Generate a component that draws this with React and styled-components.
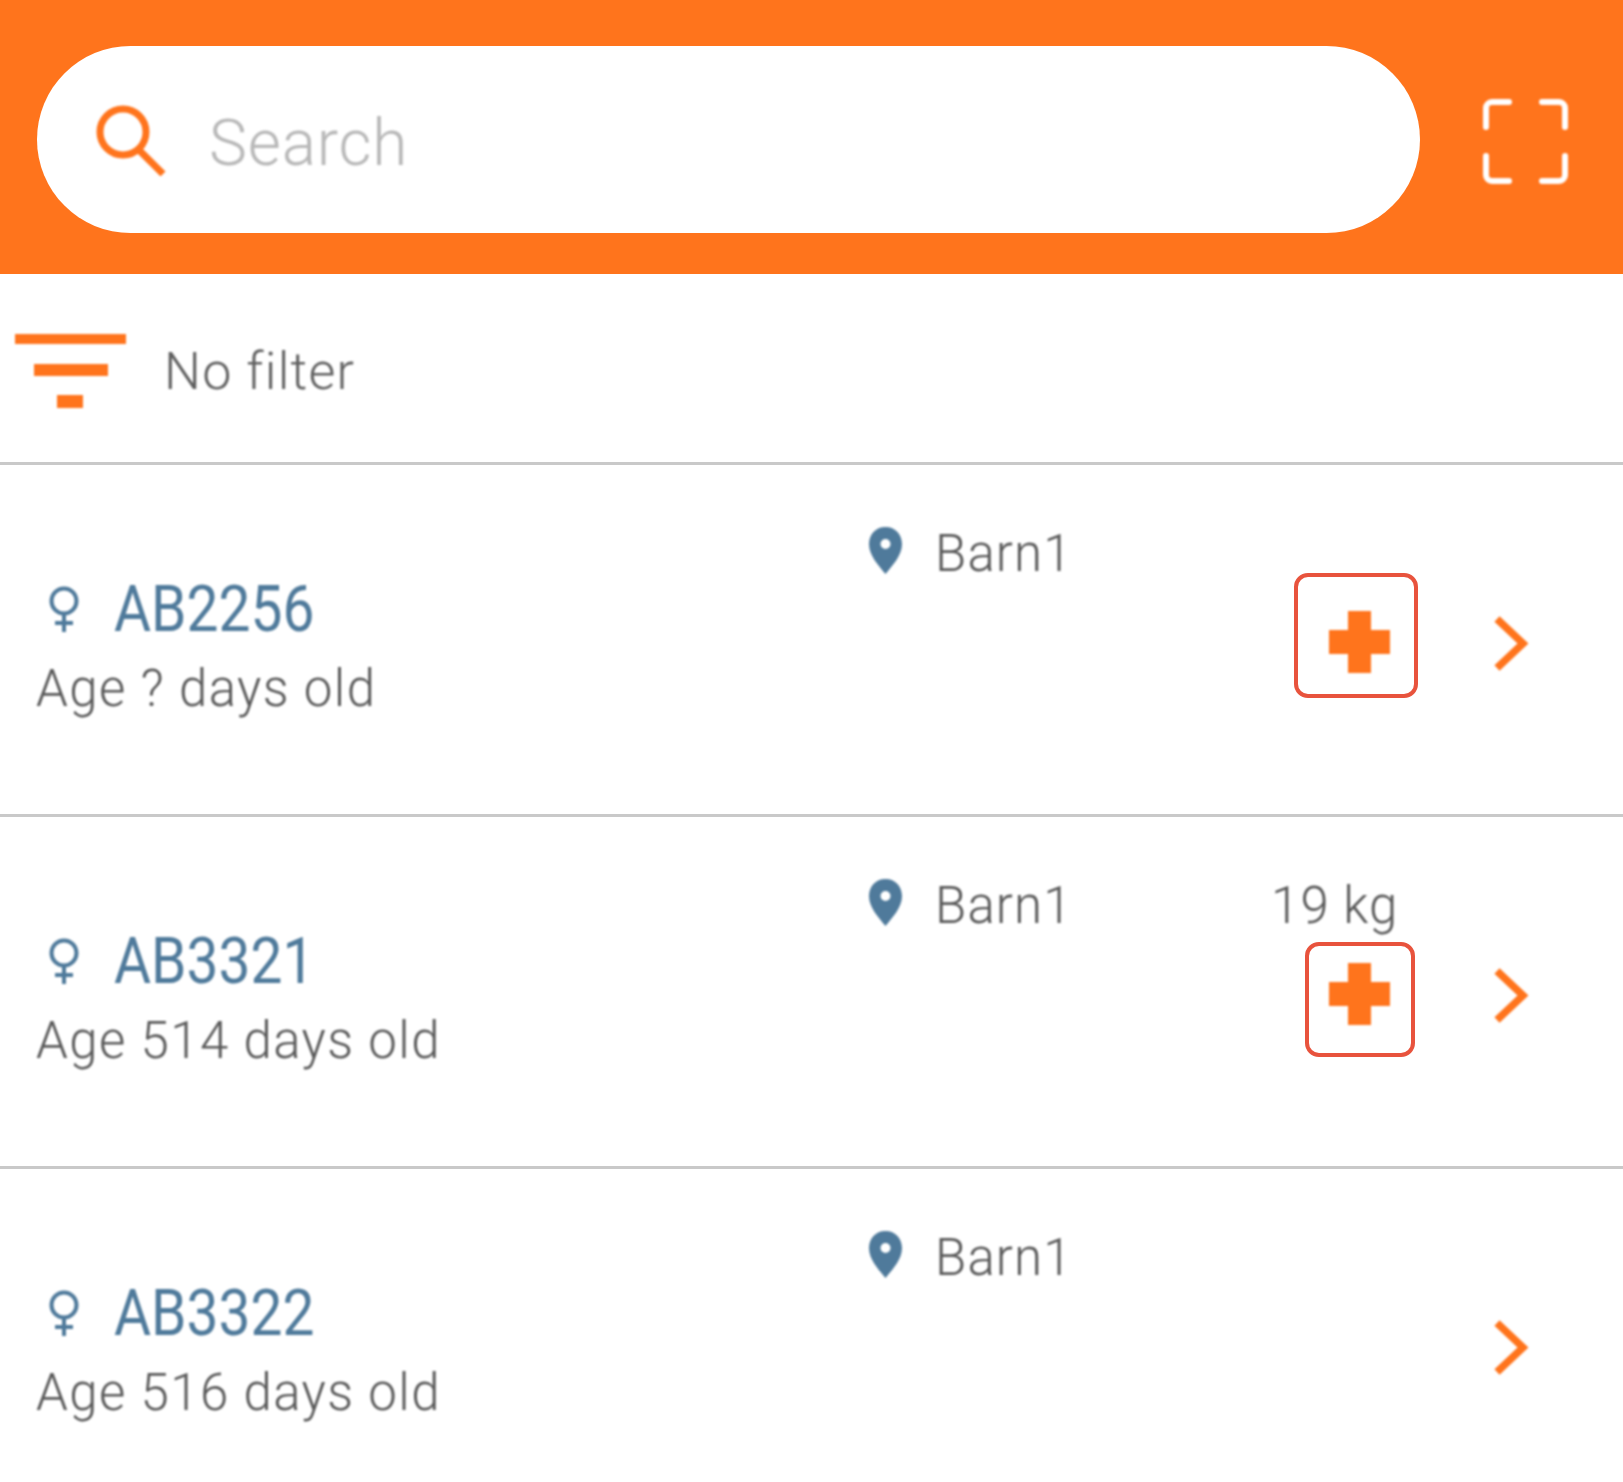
import React from "react";
import styled, { createGlobalStyle, css } from "styled-components";

const GlobalStyle = createGlobalStyle`
  html, body { margin: 0; padding: 0; background: #fff; }
  body { font-family: Roboto, "Liberation Sans", sans-serif; }
`;

const soft = css`filter: blur(1.1px);`;
const ORANGE = "#ff741c";
const SLATE = "#4f7a9b";

const Page = styled.div`
  width: 1623px;
  height: 1482px;
  overflow: hidden;
  background: #fff;
`;
const Header = styled.header`
  height: 274px;
  box-sizing: border-box;
  background: ${ORANGE};
  padding: 46px 55px 41px 37px;
  display: flex;
  align-items: center;
  gap: 63px;
`;
const SearchBox = styled.div`
  flex: 1;
  height: 187px;
  border-radius: 94px;
  background: #fff;
  display: flex;
  align-items: center;
  padding-left: 58px;
  gap: 42px;
`;
const SearchIcon = styled.svg`
  width: 72px;
  height: 72px;
  ${soft}
`;
const Placeholder = styled.span`
  font-size: 64px;
  font-weight: 300;
  letter-spacing: 0.8px;
  color: #b8b8b8;
  line-height: 1;
  margin-top: 8px;
  ${soft}
`;
const ScanIcon = styled.svg`
  width: 85px;
  height: 85px;
  flex: none;
  margin-top: 4px;
  ${soft}
`;
const FilterBar = styled.div`
  height: 191px;
  box-sizing: border-box;
  border-bottom: 3px solid #c9c9c9;
  display: flex;
  align-items: center;
  padding: 0 0 0 15px;
  gap: 38px;
`;
const FilterIcon = styled.svg`
  width: 111px;
  height: 75px;
  margin-top: 6px;
  ${soft}
`;
const FilterLabel = styled.span`
  font-size: 52px;
  font-weight: 300;
  letter-spacing: 1.2px;
  color: #5f5f5f;
  line-height: 1;
  margin-top: 7px;
  ${soft}
`;
const Row = styled.div`
  height: 352px;
  box-sizing: border-box;
  border-bottom: 3px solid #c9c9c9;
  display: grid;
  grid-template-columns: 867px 404px 1fr;
  &:last-child { border-bottom: none; }
`;
const Identity = styled.div`
  padding: 114px 0 0 36px;
  display: flex;
  flex-direction: column;
`;
const NameLine = styled.div`
  display: flex;
  align-items: center;
  height: 60px;
  gap: 33px;
  padding-left: 11px;
`;
const FemaleIcon = styled.svg`
  width: 34px;
  height: 46px;
  flex: none;
  ${soft}
`;
const Name = styled.span`
  font-size: 65px;
  color: ${SLATE};
  line-height: 1;
  transform: scaleX(0.875);
  transform-origin: left center;
  ${soft}
`;
const Age = styled.div`
  margin-top: 20px;
  height: 60px;
  font-size: 51px;
  font-weight: 300;
  letter-spacing: 1.4px;
  color: #585858;
  line-height: 60px;
  ${soft}
`;
const Location = styled.div`
  padding-top: 57px;
  display: flex;
  align-items: flex-start;
  gap: 31px;
`;
const PinIcon = styled.svg`
  width: 37px;
  height: 47px;
  flex: none;
  margin-top: 5px;
  ${soft}
`;
const Value = styled.span`
  font-size: 51px;
  font-weight: 300;
  letter-spacing: 1.1px;
  color: #585858;
  line-height: 60px;
  padding-top: 2px;
  ${soft}
`;
const Side = styled.div`
  padding-top: 57px;
  display: flex;
  flex-direction: column;
`;
const Weight = styled(Value)`
  display: block;
  box-sizing: border-box;
  height: 88px;
`;
const Actions = styled.div`
  display: flex;
  align-items: flex-start;
`;
const CrossSlot = styled.div`
  position: relative;
  width: 61px;
  height: 62px;
  margin: 1px 0 0 58px;
  flex: none;
`;
const CrossIcon = styled.svg`
  display: block;
  width: 61px;
  height: 62px;
  ${soft}
`;
const Highlight = styled.span`
  position: absolute;
  box-sizing: border-box;
  border: 4px solid #e8533d;
  border-radius: 14px;
  left: ${(p) => p.$left}px;
  top: ${(p) => p.$top}px;
  width: ${(p) => p.$w}px;
  height: ${(p) => p.$h}px;
`;
const Chevron = styled.svg`
  width: 37px;
  height: 55px;
  margin: 6px 0 0 102px;
  flex: none;
  ${soft}
`;

const animals = [
  { id: "AB2256", age: "Age ? days old", box: { $left: -35, $top: -38, $w: 124, $h: 125 }, cross: true },
  { id: "AB3321", age: "Age 514 days old", weight: "19 kg", box: { $left: -24, $top: -21, $w: 110, $h: 115 }, cross: true },
  { id: "AB3322", age: "Age 516 days old", cross: false },
];

const Female = () => (
  <FemaleIcon viewBox="0 0 34 46" fill="none" stroke={SLATE} strokeWidth="4">
    <circle cx="17" cy="15" r="12.5" />
    <path d="M17 28v18M8 37h18" />
  </FemaleIcon>
);

const Pin = () => (
  <PinIcon viewBox="0 0 37 47">
    <path
      fillRule="evenodd"
      fill={SLATE}
      d="M18.5 0C8.5 0 2 7.6 2 17.2 2 28.5 12 39 18.5 47 25 39 35 28.5 35 17.2 35 7.6 28.5 0 18.5 0Zm0 12a5 5 0 1 1 0 10 5 5 0 0 1 0-10Z"
    />
  </PinIcon>
);

const Cross = () => (
  <CrossIcon viewBox="0 0 61 62">
    <path fill={ORANGE} d="M19 0h23v19h19v24H42v19H19V43H0V19h19Z" />
  </CrossIcon>
);

const AnimalRow = ({ animal }) => (
  <Row>
    <Identity>
      <NameLine>
        <Female />
        <Name>{animal.id}</Name>
      </NameLine>
      <Age>{animal.age}</Age>
    </Identity>
    <Location>
      <Pin />
      <Value>Barn1</Value>
    </Location>
    <Side>
      <Weight>{animal.weight}</Weight>
      <Actions>
        <CrossSlot>
          {animal.cross && <Cross />}
          {animal.box && <Highlight {...animal.box} />}
        </CrossSlot>
        <Chevron viewBox="0 0 37 55" fill="none" stroke={ORANGE} strokeWidth="7.5">
          <path d="M5 3l26 24.5L5 52" />
        </Chevron>
      </Actions>
    </Side>
  </Row>
);

export default function App() {
  return (
    <Page>
      <GlobalStyle />
      <Header>
        <SearchBox>
          <SearchIcon viewBox="0 0 72 72" fill="none" stroke={ORANGE} strokeWidth="7">
            <circle cx="28" cy="28" r="23" />
            <path d="M44 46l24 24" />
          </SearchIcon>
          <Placeholder>Search</Placeholder>
        </SearchBox>
        <ScanIcon viewBox="0 0 85 85" fill="none" stroke="#fff" strokeWidth="6" strokeLinecap="round">
          <path d="M3 28V9a6 6 0 0 1 6-6h17M59 3h17a6 6 0 0 1 6 6v19M82 57v19a6 6 0 0 1-6 6H59M26 82H9a6 6 0 0 1-6-6V57" />
        </ScanIcon>
      </Header>
      <FilterBar>
        <FilterIcon viewBox="0 0 111 75" fill={ORANGE}>
          <rect x="0" y="0" width="111" height="10" />
          <rect x="19" y="30" width="74" height="12" />
          <rect x="42" y="61" width="26" height="13" />
        </FilterIcon>
        <FilterLabel>No filter</FilterLabel>
      </FilterBar>
      {animals.map((a) => (
        <AnimalRow key={a.id} animal={a} />
      ))}
    </Page>
  );
}
